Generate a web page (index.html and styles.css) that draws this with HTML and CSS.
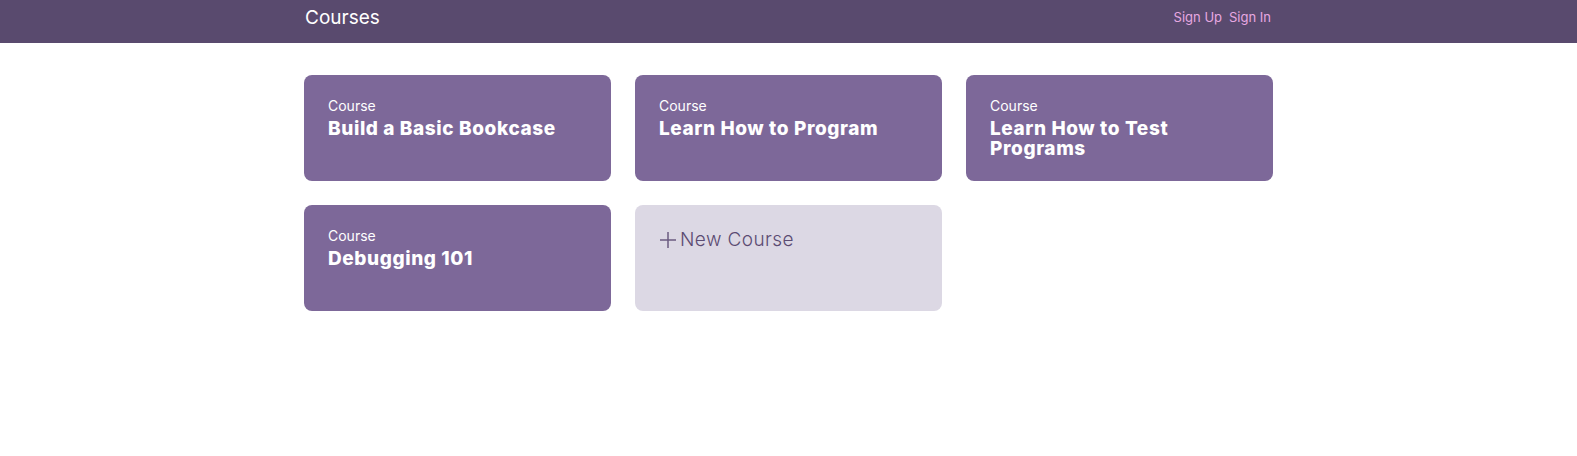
FILE: index.html
```html
<!DOCTYPE html>
<html lang="en">
<head>
<meta charset="utf-8">
<title>Courses</title>
<link rel="stylesheet" href="styles.css">
</head>
<body>
<header class="topbar">
  <div class="container topbar-inner">
    <h1 class="brand">Courses</h1>
    <nav class="auth">
      <a href="#">Sign Up</a>
      <a href="#">Sign In</a>
    </nav>
  </div>
</header>
<main class="container">
  <div class="grid">
    <a class="card" href="#">
      <span class="card-label">Course</span>
      <span class="card-title">Build a Basic Bookcase</span>
    </a>
    <a class="card" href="#">
      <span class="card-label">Course</span>
      <span class="card-title">Learn How to Program</span>
    </a>
    <a class="card" href="#">
      <span class="card-label">Course</span>
      <span class="card-title">Learn How to Test Programs</span>
    </a>
    <a class="card" href="#">
      <span class="card-label">Course</span>
      <span class="card-title">Debugging 101</span>
    </a>
    <a class="card card-new" href="#">
      <span class="new-label">
        <svg class="plus" width="18" height="18" viewBox="0 0 18 18" aria-hidden="true"><path d="M9 1v16M1 9h16" stroke="currentColor" stroke-width="1.5" fill="none"/></svg>
        New Course
      </span>
    </a>
  </div>
</main>
</body>
</html>
```

FILE: styles.css
```css
* { box-sizing: border-box; }
body {
  margin: 0;
  font-family: "Inter", "Open Sans", sans-serif;
  background: #fff;
  color: #333;
}
.container {
  width: 969px;
  margin: 0 auto;
}
.topbar {
  background: #594a6e;
  height: 43px;
}
.topbar-inner {
  height: 100%;
  display: flex;
  justify-content: space-between;
  align-items: center;
}
.brand {
  margin: 0 0 8px 1px;
  font-size: 19px;
  font-weight: 400;
  color: #fff;
}
.auth {
  display: flex;
  gap: 7px;
  margin-bottom: 10px;
  margin-right: 2px;
}
.auth a {
  color: #e7a8e1;
  text-decoration: none;
  font-size: 13px;
}
.grid {
  display: grid;
  grid-template-columns: repeat(3, 1fr);
  gap: 24px;
  padding-top: 32px;
}
.card {
  display: flex;
  flex-direction: column;
  height: 106px;
  padding: 21px 24px;
  background: #7d6899;
  border-radius: 8px;
  color: #fff;
  text-decoration: none;
}
.card-label {
  font-size: 14px;
  line-height: 20px;
}
.card-title {
  margin-top: 3px;
  font-size: 19px;
  line-height: 20px;
  font-weight: 800;
  letter-spacing: 0.6px;
}
.card-new {
  background: #dcd8e4;
  color: #5b4b72;
  padding-top: 23px;
}
.new-label {
  display: flex;
  align-items: center;
  gap: 3px;
  font-size: 19px;
  letter-spacing: 0.4px;
  font-weight: 300;
  line-height: 24px;
}
.plus { color: #6b5b80; }
```
